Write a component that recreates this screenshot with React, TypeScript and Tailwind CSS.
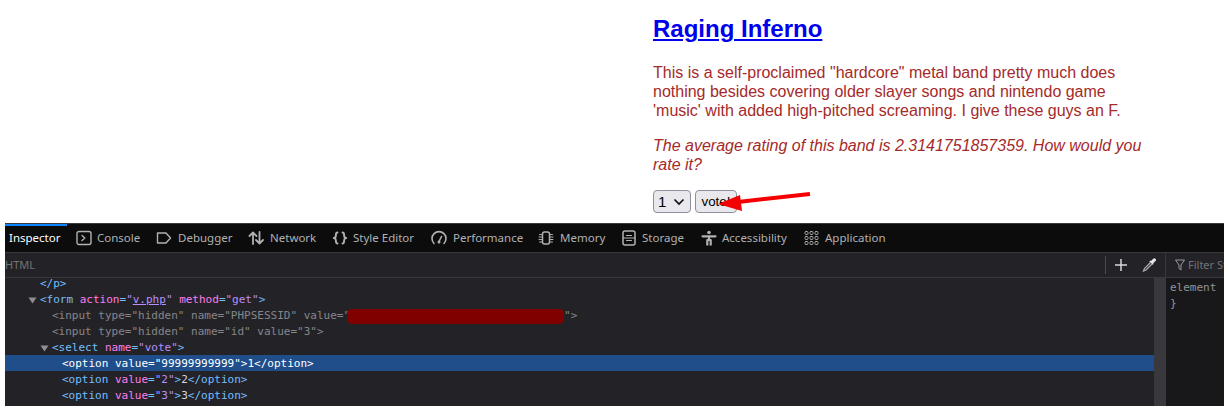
import React from "react";

const S = ({ children, w = 16 }: { children: React.ReactNode; w?: number }) => (
  <svg width={w} height={16} viewBox={`0 0 ${w} 16`} fill="none" stroke="#b1b1b3" strokeWidth={1.4} strokeLinecap="round" strokeLinejoin="round" className="shrink-0">
    {children}
  </svg>
);

const tabs: { label: string; w: number; icon: React.ReactNode; gap: number }[] = [
  { label: "Console", w: 80, gap: 5, icon: <S><rect x="1" y="1.500" width="14" height="13" rx="2" /><path d="M6 5.500 8.800 8 6 10.500" /></S> },
  { label: "Debugger", w: 92, gap: 6, icon: <S><path d="M1.500 3h8.500l4.500 5-4.500 5H1.500z" /></S> },
  { label: "Network", w: 84, gap: 6, icon: <S><path d="M5 14V2.500M1.500 6 5 2.500 8.500 6M11.500 2v11.500M8 10l3.500 3.500L15 10" strokeWidth={1.800} /></S> },
  { label: "Style Editor", w: 99, gap: 5, icon: <S><path d="M5.500 2.500C3.500 2.500 4.200 4 3.800 6 3.600 7.200 2.800 8 1.800 8c1 0 1.800.8 2 2 .4 2-.3 3.500 1.700 3.500M10.500 2.500c2 0 1.300 1.500 1.700 3.500.2 1.200 1 2 2 2-1 0-1.800.8-2 2-.4 2 .3 3.500-1.700 3.500" strokeWidth={1.900} /></S> },
  { label: "Performance", w: 107, gap: 6, icon: <S><path d="M3 13.500A7 7 0 1 1 13 13.500" strokeWidth={1.600} /><path d="M8 11.500 10.500 6.500" strokeWidth={1.600} /><circle cx="8" cy="12" r="1.500" fill="#b1b1b3" stroke="none" /></S> },
  { label: "Memory", w: 83, gap: 6, icon: <S><rect x="4.500" y="2" width="7" height="12" rx="2" strokeWidth={1.500} /><path d="M1.500 4.500h2M1 7h2.500M1 9.500h2.500M1.500 12h2M12.500 4.500h2M12.500 7H15M12.500 9.500H15M12.500 12h2" strokeWidth={1} /></S> },
  { label: "Storage", w: 80, gap: 5, icon: <S><rect x="2" y="1" width="12" height="14" rx="2" strokeWidth={1.500} /><path d="M5.500 5.500h5M5.500 10.500h5M2 8h12" strokeWidth={1.200} /></S> },
  { label: "Accessibility", w: 103, gap: 5, icon: <S><circle cx="8" cy="2.500" r="1.800" fill="#b1b1b3" stroke="none" /><path d="M1.500 6.300h13" strokeWidth={2.200} /><path d="M8 6v4M6.300 15.500v-5.500h3.400v5.500" strokeWidth={2.200} strokeLinecap="butt" /></S> },
  { label: "Application", w: 90, gap: 5, icon: <S><g strokeWidth={0.900}>
    {[2.500, 7.500, 12.500].flatMap((x) => [3, 8, 13].map((y) => <rect key={`${x}-${y}`} x={x - 1.500} y={y - 1.500} width="3" height="3" rx="1" />))}
  </g></S> },
];

const Tag = ({ children }: { children: React.ReactNode }) => <span className="text-[#75bfff]">{children}</span>;
const Attr = ({ children }: { children: React.ReactNode }) => <span className="text-[#ff7de9]">{children}</span>;
const Val = ({ children }: { children: React.ReactNode }) => <span className="text-[#b98eff]">{children}</span>;
const Arrow = () => (
  <svg width="9" height="7" viewBox="0 0 9 7" className="absolute left-[-12px] top-[5px]"><path d="M0.500 0.500h8L4.500 6.500z" fill="#8f8f93" /></svg>
);

const Row = ({ indent, children, selected }: { indent: string; children: React.ReactNode; selected?: boolean }) => (
  <div className={`h-4 leading-4 whitespace-pre ${indent} ${selected ? "bg-[#204e8a] text-white" : ""}`}>
    <div className="relative top-px">{children}</div>
  </div>
);

export default function App() {
  return (
    <div className="h-[411px] w-[1229px] overflow-hidden bg-white flex flex-col relative" style={{ fontFamily: '"Liberation Sans", Arial, sans-serif' }}>
      <div className="h-[223px] shrink-0 pl-[653px] pt-[15px] w-[1150px] text-[#a52a2a] text-base leading-[19px]">
        <h1 className="text-2xl font-bold leading-[28px]"><a href="#" className="text-[#0000ee] underline">Raging Inferno</a></h1>
        <p className="mt-[20px]">This is a self-proclaimed "hardcore" metal band pretty much does nothing besides covering older slayer songs and nintendo game 'music' with added high-pitched screaming. I give these guys an F.</p>
        <p className="mt-4 italic">The average rating of this band is 2.3141751857359. How would you rate it?</p>
        <div className="mt-4 flex gap-1 text-[13.333px] text-black">
          <div className="w-[38px] h-[23px] rounded border border-[#8f8f9d] bg-[#e9e9ed] flex items-center justify-between pl-[4px] pr-[5px] leading-none">
            <span className="text-[15px]">1</span>
            <svg width="12" height="8" viewBox="0 0 12 8"><path d="M1.500 1.500 6 6l4.500-4.500" fill="none" stroke="#111" strokeWidth="1.700" /></svg>
          </div>
          <div className="w-[42px] h-[23px] rounded border border-[#8f8f9d] bg-[#e9e9ed] flex items-center justify-center text-[13.333px]">vote!</div>
        </div>
      </div>

      <svg width="95" height="24" viewBox="0 0 95 24" className="absolute left-[718px] top-[190px]">
        <path d="M92 4 L20 12" stroke="#f40000" strokeWidth="4" fill="none" />
        <path d="M0 14 L22 5 L24 21 Z" fill="#f40000" />
      </svg>

      <div className="mx-[5px] h-[183px] flex flex-col bg-[#232327] text-[#b1b1b3]" style={{ fontFamily: '"Noto Sans", "Open Sans", sans-serif' }}>
        <div className="h-[30px] shrink-0 bg-[#0c0c0d] border-t border-[#38383d] border-b flex text-[11.500px] relative">
          <div className="absolute left-0 top-0 w-[62px] h-[2px] bg-[#0a84ff]" />
          <div className="w-[71px] pl-[4px] flex items-center text-white">Inspector</div>
          {tabs.map((t) => (
            <div key={t.label} style={{ width: t.w, gap: t.gap }} className="flex items-center whitespace-nowrap shrink-0">
              {t.icon}
              <span>{t.label}</span>
            </div>
          ))}
        </div>

        <div className="h-[25px] shrink-0 border-b border-[#38383d] flex items-center text-[11px] text-[#737373]">
          <span className="flex-1">HTML</span>
          <div className="w-px h-[18px] bg-[#4a4a4f]" />
          <svg width="14" height="14" viewBox="0 0 14 14" className="ml-[8px]"><path d="M7 1v12M1 7h12" stroke="#d7d7db" strokeWidth="1.500" /></svg>
          <svg width="14" height="14" viewBox="0 0 14 14" className="ml-[14px] mr-[4px]"><path d="M8.500 4.500 2.500 10.500 1.500 13l2.500-1 6-6" fill="none" stroke="#b1b1b3" strokeWidth="1.200" /><path d="M7 3l4 4 .5-2 2-2a1.500 1.500 0 0 0-2.300-2.300l-2 2z" fill="#e4e4e6" /></svg>
          <div className="w-[1px] h-[24px] bg-[#38383d] ml-[5px]" />
          <div className="w-[58px] pl-[9px] flex items-center gap-[3px] whitespace-nowrap overflow-hidden">
            <svg width="10" height="12" viewBox="0 0 10 12" className="shrink-0"><path d="M.500 1h9L6 6v5L4 9.500V6z" fill="none" stroke="#9a9a9e" strokeWidth="1" /></svg>
            <span>Filter Styles</span>
          </div>
        </div>

        <div className="flex-1 flex min-h-0">
          <div className="flex-1 overflow-hidden text-[11px] text-[#86868a]" style={{ fontFamily: '"DejaVu Sans Mono", monospace' }}>
            <div className="-mt-[3px]"><Row indent="pl-[35px]"><Tag>&lt;/p&gt;</Tag></Row></div>
            <Row indent="pl-[35px]"><Arrow /><Tag>&lt;form</Tag> <Attr>action</Attr><Tag>=</Tag><Val>"<span className="underline">v.php</span>"</Val> <Attr>method</Attr><Tag>=</Tag><Val>"get"</Val><Tag>&gt;</Tag></Row>
            <Row indent="pl-[47px]">&lt;input type="hidden" name="PHPSESSID" value="<span className="inline-block align-middle w-[217px] h-[15px] rounded-[5px] bg-[#800000] ml-[-3px]" />"&gt;</Row>
            <Row indent="pl-[47px]">&lt;input type="hidden" name="id" value="3"&gt;</Row>
            <Row indent="pl-[47px]"><Arrow /><Tag>&lt;select</Tag> <Attr>name</Attr><Tag>=</Tag><Val>"vote"</Val><Tag>&gt;</Tag></Row>
            <Row indent="pl-[57px]" selected>&lt;option value="99999999999"&gt;1&lt;/option&gt;</Row>
            <Row indent="pl-[57px]"><Tag>&lt;option</Tag> <Attr>value</Attr><Tag>=</Tag><Val>"2"</Val><Tag>&gt;</Tag><span className="text-[#d7d7db]">2</span><Tag>&lt;/option&gt;</Tag></Row>
            <Row indent="pl-[57px]"><Tag>&lt;option</Tag> <Attr>value</Attr><Tag>=</Tag><Val>"3"</Val><Tag>&gt;</Tag><span className="text-[#d7d7db]">3</span><Tag>&lt;/option&gt;</Tag></Row>
          </div>
          <div className="w-[12px] bg-[#38383d] shrink-0" />
          <div className="w-[58px] shrink-0 bg-[#18181a] pl-[4px] pt-[2px] text-[11px] leading-4 text-[#939395] whitespace-nowrap overflow-hidden" style={{ fontFamily: '"DejaVu Sans Mono", monospace' }}>
            <div>element {"{"}</div>
            <div>{"}"}</div>
          </div>
        </div>
      </div>
    </div>
  );
}
